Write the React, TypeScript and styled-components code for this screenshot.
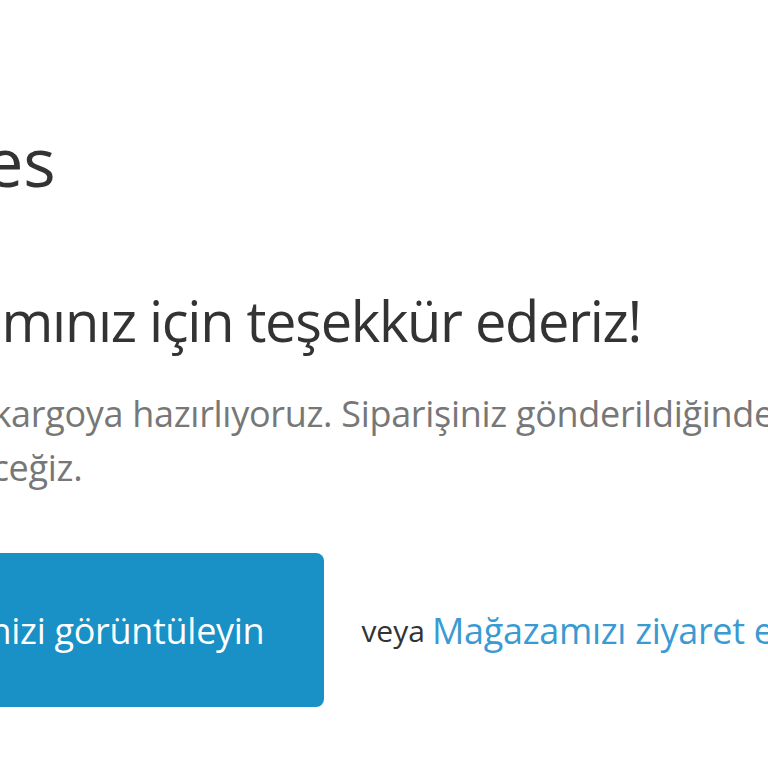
import React from "react";
import styled, { createGlobalStyle } from "styled-components";

const GlobalStyle = createGlobalStyle`
  html, body {
    margin: 0;
    padding: 0;
    background: #ffffff;
    overflow: hidden;
  }
  body {
    font-family: "Open Sans", "Noto Sans", sans-serif;
  }
`;

const Page = styled.div`
  width: 768px;
  height: 768px;
  overflow: hidden;
  background: #ffffff;
`;

const Content = styled.div`
  margin-left: -195px;
  padding-top: 113px;
  width: 1400px;
`;

const ShopName = styled.h1`
  margin: 0;
  font-size: 68px;
  line-height: 96px;
  font-weight: 400;
  color: #333333;
`;

const Title = styled.h2<{ $nudge?: number }>`
  margin: 73px 0 0 ${(p) => p.$nudge ?? 0}px;
  font-size: 56px;
  line-height: 76px;
  font-weight: 400;
  letter-spacing: -1.3px;
  color: #333333;
`;

const Text = styled.p<{ $nudge?: number }>`
  margin: 29px 0 0 ${(p) => p.$nudge ?? 0}px;
  font-size: 36px;
  line-height: 54px;
  letter-spacing: -0.3px;
  color: #777777;
`;

const Actions = styled.div`
  display: flex;
  align-items: center;
  margin-top: 58px;
`;

const Button = styled.a`
  display: flex;
  align-items: center;
  height: 154px;
  box-sizing: border-box;
  padding: 0 60px 0 66px;
  background: #1990c6;
  border-radius: 8px;
  color: #ffffff;
  font-size: 36px;
  letter-spacing: -0.3px;
  text-decoration: none;
`;

const Or = styled.span`
  margin-left: 37px;
  font-size: 30px;
  color: #333333;
`;

const Link = styled.a`
  margin-left: 7px;
  font-size: 36px;
  letter-spacing: -0.3px;
  color: #3a9ad3;
  text-decoration: none;
  white-space: nowrap;
`;

export default function App() {
  return (
    <Page>
      <GlobalStyle />
      <Content>
        <ShopName>Dresses</ShopName>
        <Title $nudge={4}>Satın alımınız için teşekkür ederiz!</Title>
        <Text $nudge={4}>
          Siparişinizi kargoya hazırlıyoruz. Siparişiniz gönderildiğinde sizi
          <br />
          bilgilendireceğiz.
        </Text>
        <Actions>
          <Button href="#">Siparişinizi görüntüleyin</Button>
          <Or>veya</Or>
          <Link href="#">Mağazamızı ziyaret edin</Link>
        </Actions>
      </Content>
    </Page>
  );
}
